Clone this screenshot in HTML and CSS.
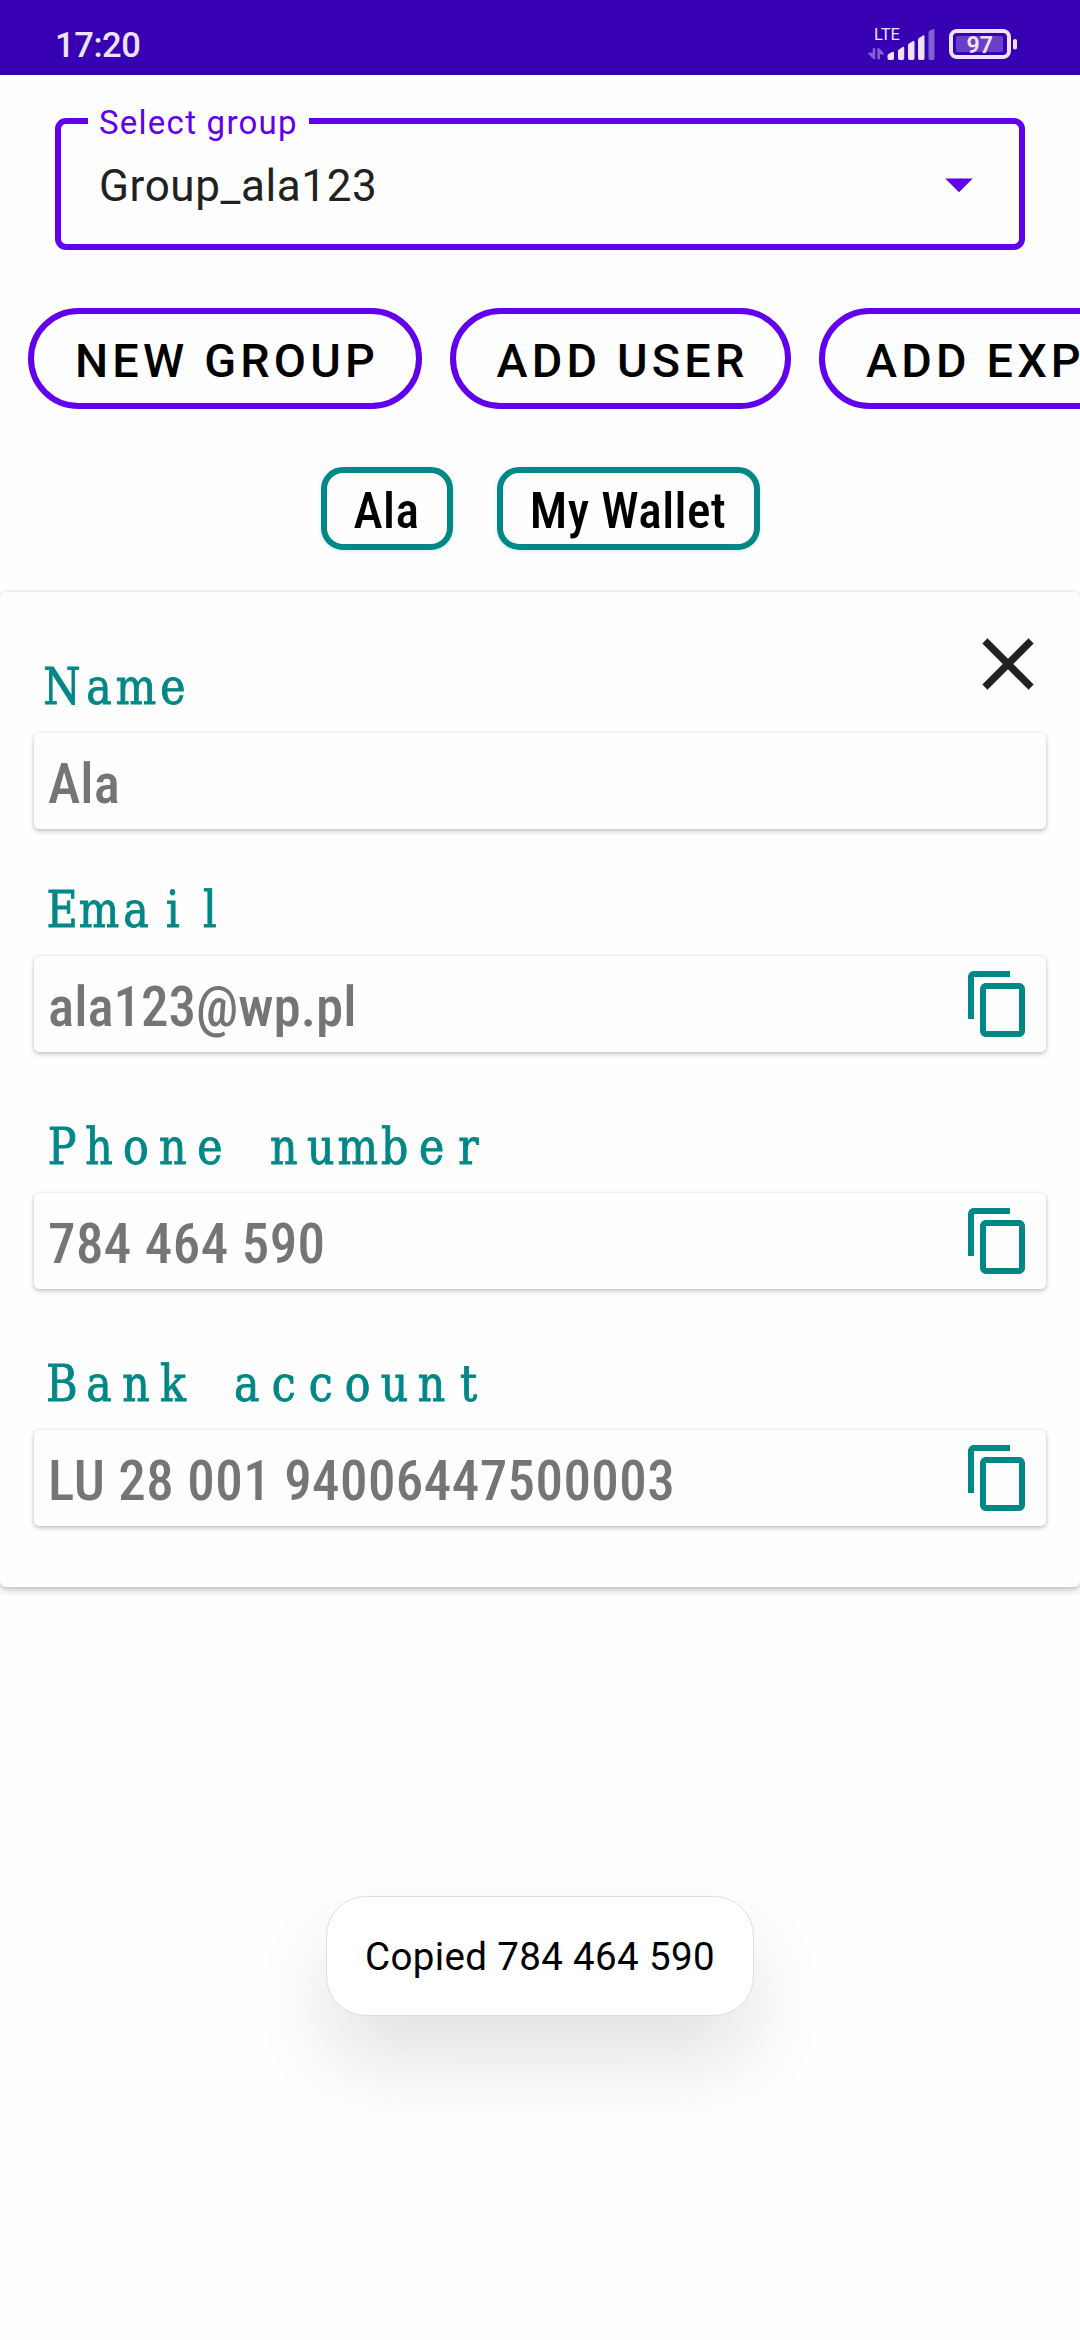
FILE: index.html
```
<!DOCTYPE html>
<html lang="en">
<head>
<meta charset="utf-8">
<title>Group details</title>
<link rel="stylesheet" href="styles.css">
</head>
<body>
<svg class="defs" aria-hidden="true">
  <symbol id="copy" viewBox="0 0 24 24">
    <path d="M16 1H4C2.9 1 2 1.9 2 3v14h2V3h12V1zM19 5H8C6.9 5 6 5.9 6 7v14c0 1.1.9 2 2 2h11c1.1 0 2-.9 2-2V7c0-1.1-.9-2-2-2zM19 21H8V7h11v14z"/>
  </symbol>
</svg>

<header class="status">
  <span class="clock">17:20</span>
  <svg class="indicators" viewBox="0 0 156 44">
    <text class="net" x="6" y="19.5" textLength="26" lengthAdjust="spacingAndGlyphs">LTE</text>
    <g opacity=".42">
      <path d="M4.7 28.2h2.6V39.3H5.6L0 33.6v-.8h4.7zM9.3 28.2h2L16 33.4v1.2h-4v4.7H9.3z"/>
      <path d="M60.5 12.5q0-1.2 1-1.8l3.6-1.6q1.4-.5 1.4 1.1V38q0 2-1.6 2h-2.9q-1.5 0-1.5-2z"/>
    </g>
    <path d="M19.5 36q0-1.3 1-2l3.6-2q1.9-.8 1.9 1V38q0 2-1.6 2h-3.4q-1.5 0-1.5-2z"/>
    <path d="M30 31.3q0-1.3 1-1.9l3.6-2.5q1.6-.7 1.6 1.1V38q0 2-1.6 2h-3q-1.6 0-1.6-2z"/>
    <path d="M40 25.5q0-1.3 1-1.9l4-2.5q1.5-.6 1.5 1.1V38q0 2-1.6 2h-3.3q-1.6 0-1.6-2z"/>
    <path d="M50 20q0-1.3 1-1.9l4-2.7q1.5-.6 1.5 1.1V38q0 2-1.6 2h-3.3q-1.6 0-1.6-2z"/>
    <rect x="83" y="11" width="58" height="26" rx="6" fill="none" stroke="#eee3fc" stroke-width="4"/>
    <rect x="88" y="16" width="47" height="16" rx="2" opacity=".28"/>
    <rect x="145" y="19" width="4" height="10.5" rx="2"/>
    <text class="pct" x="98.5" y="33" textLength="26.5" lengthAdjust="spacingAndGlyphs">97</text>
  </svg>
</header>

<main>
  <div class="select">
    <span class="select-label">Select group</span>
    <span class="select-value">Group_ala123</span>
    <svg class="caret" viewBox="0 0 24 24"><path d="M7 10l5 5 5-5z"/></svg>
  </div>

  <div class="actions">
    <button class="pill">NEW GROUP</button>
    <button class="pill">ADD USER</button>
    <button class="pill">ADD EXPENSE</button>
  </div>

  <div class="chips">
    <span class="chip chip-short">Ala</span>
    <span class="chip chip-long">My Wallet</span>
  </div>

  <section class="card">
    <div class="head">
      <svg class="label" viewBox="0 0 520 60"><text transform="scale(.95 1)" y="31" x="29.5 68.4 107.3 146.2">Name</text></svg>
      <svg class="close" viewBox="0 0 24 24"><path d="M19 6.41L17.59 5 12 10.59 6.41 5 5 6.41 10.59 12 5 17.59 6.41 19 12 13.41 17.59 19 19 17.59 13.41 12z"/></svg>
    </div>
    <div class="field"><span>Ala</span></div>

    <svg class="label label-near" viewBox="0 0 520 60"><text transform="scale(.95 1)" y="31" x="29.5 68.4 107.3 146.2 185.1">Email</text></svg>
    <div class="field"><span>ala123@wp.pl</span><svg class="copy"><use href="#copy"/></svg></div>

    <svg class="label label-far" viewBox="0 0 520 60"><text transform="scale(.95 1)" y="31" x="29.5 68.4 107.3 146.2 185.1 224 262.9 301.8 340.7 379.6 418.5 457.4">Phone number</text></svg>
    <div class="field digits"><span>784 464 590</span><svg class="copy"><use href="#copy"/></svg></div>

    <svg class="label label-far" viewBox="0 0 520 60"><text transform="scale(.95 1)" y="31" x="29.5 68.4 107.3 146.2 185.1 224 262.9 301.8 340.7 379.6 418.5 457.4">Bank account</text></svg>
    <div class="field digits"><span>LU 28 001 94006447500003</span><svg class="copy"><use href="#copy"/></svg></div>
  </section>
</main>

<div class="toast">Copied 784 464 590</div>
</body>
</html>
```
FILE: styles.css
```
* { box-sizing: border-box; }

body {
  margin: 0;
  position: relative;
  width: 1080px;
  height: 2340px;
  overflow: hidden;
  background: #fefefe;
  color: #000;
  font-family: Roboto, sans-serif;
}

svg { display: block; flex: none; }
.defs { position: absolute; width: 0; height: 0; }

.status {
  display: flex;
  align-items: center;
  justify-content: space-between;
  height: 75px;
  padding: 15px 56px 0 55px;
  background: #3700b3;
  color: #eee3fc;
}
.clock { font-size: 34.5px; font-weight: 500; letter-spacing: -0.4px; }
.indicators { width: 156px; height: 44px; margin-top: -6px; fill: #eee3fc; }
.net { font-size: 17px; }
.pct { font-size: 23px; font-weight: 600; }

.select {
  position: relative;
  display: flex;
  align-items: center;
  justify-content: space-between;
  height: 132px;
  margin: 43px 55px 0;
  padding: 0 27px 0 38px;
  border: 6px solid #6200ee;
  border-radius: 11px;
}
.select-label {
  position: absolute;
  top: -21px;
  left: 27px;
  width: 221px;
  padding-left: 11px;
  line-height: 40px;
  background: #fefefe;
  color: #6200ee;
  font-size: 33px;
  letter-spacing: 1.25px;
  white-space: nowrap;
}
.select-value { padding-top: 4px; color: #212121; font-size: 44px; letter-spacing: 0.6px; }
.caret { width: 66px; height: 66px; fill: #6200ee; }

.actions { display: flex; gap: 28px; margin-top: 58px; padding-left: 28px; overflow: hidden; }
.pill {
  flex: none;
  height: 101px;
  padding: 4px 36.5px 0 41px;
  border: 6px solid #6200ee;
  border-radius: 51px;
  background: none;
  color: #000;
  font: 500 46.75px Roboto, sans-serif;
  letter-spacing: 4.2px;
  white-space: nowrap;
}

.chips { display: flex; justify-content: center; gap: 44px; margin-top: 58px; }
.chip {
  display: flex;
  align-items: center;
  justify-content: center;
  height: 83px;
  padding-top: 5px;
  border: 6px solid #018786;
  border-radius: 22px;
  font: 500 49.5px "Roboto Condensed", Roboto, sans-serif;
  letter-spacing: 0.4px;
  box-shadow: 0 1px 4px rgba(1, 135, 134, .18);
}
.chip-short { width: 132px; }
.chip-long { width: 263px; }

.card {
  height: 995px;
  margin-top: 42px;
  padding: 28px 34px 0;
  border-radius: 6px;
  background: #fefefe;
  box-shadow: 0 3px 7px rgba(0, 0, 0, .24), 0 0 3px rgba(0, 0, 0, .08);
}
.head {
  display: flex;
  justify-content: space-between;
  align-items: flex-start;
  height: 113px;
  margin-right: -6px;
}
.head .label { align-self: flex-end; }
.close { width: 88px; height: 88px; fill: #212121; }

.label {
  width: 520px;
  height: 60px;
  fill: #018786;
  stroke: #018786;
  stroke-width: 0.9px;
  font-family: "DejaVu Serif Condensed", "DejaVu Serif", serif;
  font-stretch: condensed;
  font-size: 50px;
  text-anchor: middle;
  overflow: visible;
}
.label-near { margin-top: 67px; }
.label-far { margin-top: 81px; }

.field {
  display: flex;
  justify-content: space-between;
  align-items: center;
  height: 96px;
  padding: 0 12px 0 14px;
  border-radius: 5px;
  color: #757575;
  font: 500 55px "Roboto Condensed", Roboto, sans-serif;
  box-shadow: 0 2px 5px rgba(0, 0, 0, .24), 0 0 2px rgba(0, 0, 0, .1);
}
.digits { letter-spacing: 0.43px; }
.field span { padding-top: 6px; }
.copy { width: 72px; height: 72px; fill: #018786; }

.toast {
  position: absolute;
  top: 1896px;
  left: 326px;
  width: 428px;
  height: 120px;
  padding-top: 1px;
  border: 1px solid #dedede;
  border-radius: 40px;
  background: #fff;
  font-size: 38.5px;
  line-height: 118px;
  letter-spacing: 0.35px;
  text-align: center;
  white-space: nowrap;
  box-shadow: 0 44px 80px rgba(0, 0, 0, .1), 0 50px 120px rgba(0, 0, 0, .015);
}
```
